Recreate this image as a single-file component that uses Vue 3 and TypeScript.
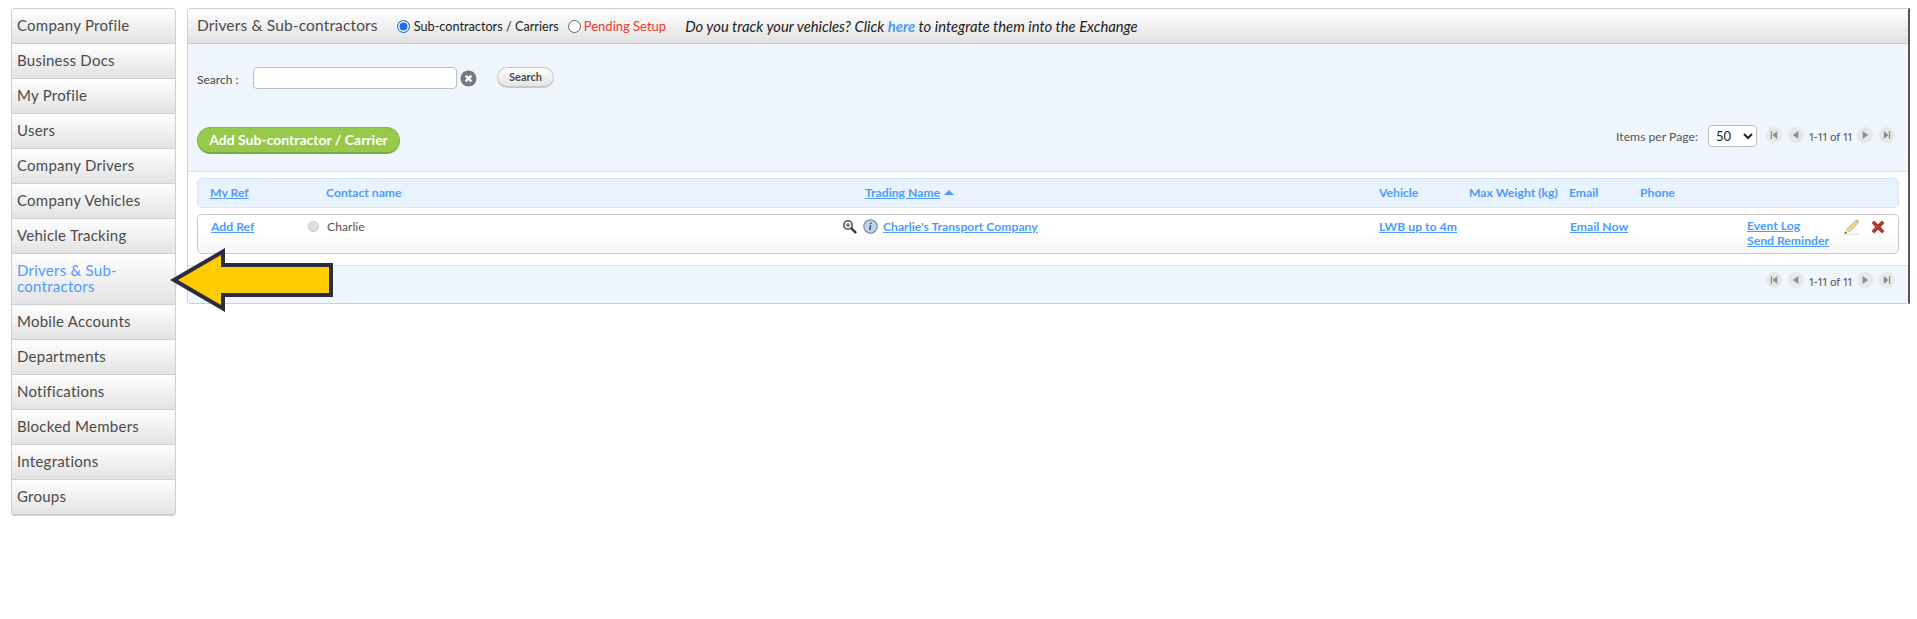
<script setup lang="ts">
const navItems: string[] = [
  'Company Profile', 'Business Docs', 'My Profile', 'Users', 'Company Drivers',
  'Company Vehicles', 'Vehicle Tracking', 'Drivers & Sub-contractors', 'Mobile Accounts',
  'Departments', 'Notifications', 'Blocked Members', 'Integrations', 'Groups',
]
const activeItem = 'Drivers & Sub-contractors'
const pagers = [
  { cls: 'first', d: 'M6 5h1.6v10H6zM14 5v10l-6-5z' },
  { cls: 'prev', d: 'M13 5v10l-7-5z' },
]
const pagersEnd = [
  { cls: 'next', d: 'M7 5v10l7-5z' },
  { cls: 'last', d: 'M6 5v10l6-5zM12.4 5H14v10h-1.6z' },
]
</script>

<template>
  <div class="page">
    <nav class="side">
      <a v-for="item in navItems" :key="item" class="side-item" :class="{ active: item === activeItem }">{{ item }}</a>
    </nav>

    <main class="panel">
      <header class="head">
        <h1 class="title">Drivers &amp; Sub-contractors</h1>
        <label class="radio first-radio"><span class="dot on"></span>Sub-contractors / Carriers</label>
        <label class="radio second-radio"><span class="dot"></span><span class="red">Pending Setup</span></label>
        <em class="promo">Do you track your vehicles? Click <a class="here">here</a> to integrate them into the Exchange</em>
      </header>

      <section class="tools">
        <div class="search">
          <span class="search-label">Search :</span>
          <input class="search-input" type="text" />
          <svg class="clear" width="17" height="17" viewBox="0 0 17 17">
            <circle cx="8.5" cy="8.5" r="8" fill="#76797b" />
            <path d="M5.6 5.6l5.8 5.8M11.4 5.6l-5.8 5.8" stroke="#fff" stroke-width="2.4" />
          </svg>
          <button class="search-btn">Search</button>
        </div>
        <div class="actions">
          <button class="add-btn">Add Sub-contractor / Carrier</button>
          <div class="paging">
            <span class="ipp">Items per Page:</span>
            <select class="select"><option>50</option></select>
            <div class="pager">
              <svg v-for="p in pagers" :key="p.cls" class="pg" :class="p.cls" width="16" height="16" viewBox="0 0 20 20"><circle cx="10" cy="10" r="10" fill="#e6e8ea" /><path :d="p.d" fill="#8b8f93" /></svg>
              <span class="count">1-11 of 11</span>
              <svg v-for="p in pagersEnd" :key="p.cls" class="pg" :class="p.cls" width="16" height="16" viewBox="0 0 20 20"><circle cx="10" cy="10" r="10" fill="#e6e8ea" /><path :d="p.d" fill="#8b8f93" /></svg>
            </div>
          </div>
        </div>
      </section>

      <section class="table">
        <div class="grid thead">
          <a class="link">My Ref</a>
          <span>Contact name</span>
          <span><a class="link">Trading Name</a><i class="sort"></i></span>
          <span>Vehicle</span>
          <span>Max Weight (kg)</span>
          <span>Email</span>
          <span>Phone</span>
        </div>
        <div class="grid trow">
          <a class="link add-ref">Add Ref</a>
          <span class="contact">
            <i class="status"></i>
            <span class="name">Charlie</span>
          </span>
          <span class="trading">
            <svg class="zoom" width="15" height="15" viewBox="0 0 15 15">
              <circle cx="6" cy="6" r="4.3" fill="#ececec" stroke="#555" stroke-width="1.6" />
              <path d="M9.4 9.4l4 4" stroke="#3c3c3c" stroke-width="2.4" stroke-linecap="round" />
              <path d="M4 6h4M6 4v4" stroke="#555" stroke-width="1.1" />
            </svg>
            <svg class="info" width="15" height="15" viewBox="0 0 15 15">
              <circle cx="7.5" cy="7.5" r="6.7" fill="#bcd3ec" stroke="#7d8790" stroke-width="1.1" />
              <path d="M7.9 3.4v1.5M7.6 6.2l-.9 5" stroke="#3b4654" stroke-width="1.4" />
            </svg>
            <a class="link">Charlie's Transport Company</a>
          </span>
          <a class="link">LWB up to 4m</a>
          <span></span>
          <a class="link email-now">Email Now</a>
          <span></span>
          <span class="row-end">
            <span class="logs">
              <a class="link">Event Log</a>
              <a class="link">Send Reminder</a>
            </span>
            <svg class="pencil" width="18" height="16" viewBox="0 0 18 16">
              <path d="M1 15.4c5-.4 10-.4 16 0" stroke="#dcdcd8" stroke-width="1" fill="none" />
              <path d="M3.6 10.6L12.6 1.4l2.6 2.4-9 9.2z" fill="#ecd98a" stroke="#b8a65c" stroke-width=".7" />
              <path d="M12.6 1.4l1-1 2.6 2.4-1 1z" fill="#d9a08f" />
              <path d="M3.6 10.6l2.6 2.4L1.4 15z" fill="#f0e2bd" />
              <path d="M1.4 15l1.2-2.6 1.2 1.4z" fill="#222" />
            </svg>
            <svg class="cross" width="14" height="14" viewBox="0 0 14 14">
              <path d="M3 .6L7 4.2 11 .6l2.4 2.5L9.8 7l3.6 3.9-2.4 2.5L7 9.8l-4 3.6L.6 10.9 4.2 7 .6 3.1z" fill="#b03a30" />
            </svg>
          </span>
        </div>
      </section>

      <footer class="foot">
        <div class="pager">
          <svg v-for="p in pagers" :key="p.cls" class="pg" :class="p.cls" width="16" height="16" viewBox="0 0 20 20"><circle cx="10" cy="10" r="10" fill="#e6e8ea" /><path :d="p.d" fill="#8b8f93" /></svg>
          <span class="count">1-11 of 11</span>
          <svg v-for="p in pagersEnd" :key="p.cls" class="pg" :class="p.cls" width="16" height="16" viewBox="0 0 20 20"><circle cx="10" cy="10" r="10" fill="#e6e8ea" /><path :d="p.d" fill="#8b8f93" /></svg>
        </div>
      </footer>
    </main>

    <svg class="arrow" width="168" height="70" viewBox="0 0 168 70">
      <path d="M6 35L55 6.5V20H163V50H55V63.5Z" fill="#ffcc00" stroke="#2b2c42" stroke-width="4" stroke-linejoin="miter" />
    </svg>
  </div>
</template>

<style>
html, body { margin: 0; background: #fff; }
</style>

<style scoped>
* { box-sizing: border-box; }
.page {
  position: relative;
  display: flex;
  align-items: flex-start;
  gap: 11px;
  width: 1917px;
  height: 619px;
  padding: 8px 7px 0 11px;
  font-family: Lato, "Noto Sans", sans-serif;
  font-variant-numeric: proportional-nums;
  color: #4a4a4a;
  overflow: hidden;
}
.side {
  display: flex;
  flex-direction: column;
  flex: 0 0 165px;
  border: 1px solid #cfcfcf;
  border-bottom-width: 2px;
  border-radius: 4px;
  overflow: hidden;
}
.side-item {
  display: flex;
  align-items: center;
  min-height: 35px;
  padding: 0 16px 3px 5px;
  font-size: 15px;
  line-height: 16px;
  color: #4b4b4b;
  background: linear-gradient(#fff, #e3e3e3);
  border-bottom: 1px solid #cfcfcf;
  letter-spacing: .25px;
}
.side-item:last-child { border-bottom: 0; min-height: 34px; }
.side-item.active { color: #4d9bff; min-height: 51px; padding-right: 40px; }
.panel {
  flex: 1;
  height: 296px;
  display: flex;
  flex-direction: column;
  border: 1px solid #cfcfcf;
  border-right: 2px solid #555;
  border-radius: 4px 0 0 4px;
  overflow: hidden;
}
.head {
  display: flex;
  align-items: center;
  flex: 0 0 35px;
  padding: 0 9px;
  background: linear-gradient(#fff, #e2e2e2);
  border-bottom: 1px solid #c9c9c9;
  font-size: 12.7px;
  color: #222;
}
.title {
  margin: 0 0 3px;
  font-size: 15.5px;
  font-weight: 400;
  color: #4b4b4b;
  letter-spacing: .15px;
}
.radio { display: flex; align-items: center; gap: 4px; }
.first-radio { margin-left: 19px; }
.second-radio { margin-left: 9px; gap: 3px; }
.dot {
  width: 13px;
  height: 13px;
  border: 1px solid #666;
  border-radius: 50%;
  background: #fff;
}
.dot.on { border: 1.5px solid #1f6fe5; box-shadow: inset 0 0 0 1.5px #fff; background: #1f6fe5; }
.red { color: #f1362a; font-size: 13px; }
.promo { margin-left: 19px; font-size: 14.8px; color: #222; }
.here { color: #4d9bff; font-weight: 700; }
.tools {
  flex: 0 0 128px;
  padding: 23px 9px 0;
  background: #eff6fe;
  border-bottom: 1px solid #d3e5f8;
}
.search { display: flex; align-items: center; height: 22px; }
.search-label { width: 56px; font-size: 12px; color: #444; padding-top: 2px; }
.search-input {
  width: 204px;
  height: 22px;
  border: 1px solid #bdbdbd;
  border-radius: 4px;
  background: #fff;
}
.clear { margin-left: 3px; }
.search-btn {
  margin: -2px 0 0 20px;
  width: 57px;
  height: 21px;
  padding: 0;
  border: 1px solid #c7c7c7;
  border-bottom-width: 2px;
  border-radius: 11px;
  background: linear-gradient(#fff, #e4e4e4);
  font: 700 11px Lato, sans-serif;
  color: #4a4a4a;
}
.actions {
  display: flex;
  justify-content: space-between;
  align-items: flex-start;
  margin-top: 38px;
  padding-right: 4px;
}
.add-btn {
  width: 203px;
  height: 27px;
  padding: 0 0 2px;
  border: 1px solid #86b546;
  border-bottom: 2px solid #7ea846;
  border-radius: 14px;
  background: #97c94a;
  font: 700 14px Lato, sans-serif;
  color: #fff;
}
.paging { display: flex; align-items: center; margin-top: -2px; }
.ipp { font-size: 12.2px; color: #555; margin-right: 10px; }
.select {
  width: 49px;
  height: 22px;
  margin-right: 9px;
  padding: 0 0 0 3px;
  border: 1px solid #bdbdbd;
  border-radius: 4px;
  background: #fff;
  font: 13px Lato, sans-serif;
  color: #222;
}
.pager { display: flex; align-items: center; }
.pg { margin: -3px 0 0; }
.prev { margin-left: 6px; margin-right: 5px; }
.next { margin-left: 6px; margin-right: 6px; }
.count { font-size: 11.5px; color: #555; width: 42px; text-align: center; white-space: nowrap; }
.table { flex: 0 0 93px; padding: 6px 9px 0 9px; background: #fff; }
.grid {
  display: grid;
  grid-template-columns: 116px 539px 514px 90px 100px 71px 107px 1fr;
  padding-left: 12px;
  border-radius: 5px;
  font-size: 12.2px;
  font-weight: 700;
}
.thead {
  height: 30px;
  align-items: center;
  background: #e9f3fe;
  border: 1px solid #d3e5f8;
  color: #4d9bff;
  padding-bottom: 2px;
}
.trow {
  height: 40px;
  margin-top: 6px;
  padding-top: 4px;
  align-items: start;
  border: 1px solid #c9c9c9;
  background: linear-gradient(#fff 40%, #f6f6f6);
}
.link { color: #4d9bff; text-decoration: underline; font-weight: 700; }
.sort {
  display: inline-block;
  margin-left: 4px;
  border: 5px solid transparent;
  border-top: 0;
  border-bottom: 5px solid #4d9bff;
  vertical-align: 2px;
}
.add-ref { margin-left: 1px; }
.contact { display: flex; align-items: center; margin-left: -18px; }
.status {
  width: 11px;
  height: 11px;
  border-radius: 50%;
  background: #dfdfdf;
  border: 1px solid #c5c5c5;
}
.name { margin-left: 8px; font-weight: 400; color: #555; font-size: 12.2px; }
.trading { display: flex; align-items: center; margin-left: -23px; gap: 5.5px; }
.email-now { margin-left: 1px; justify-self: start; }
.trow > .link { justify-self: start; }
.row-end { display: flex; align-items: flex-start; white-space: nowrap; }
.logs { display: flex; flex-direction: column; line-height: 14.6px; width: 96px; }
.logs .link { align-self: flex-start; }
.cross { margin: 1px 0 0 10px; }
.foot {
  flex: 1;
  display: flex;
  justify-content: flex-end;
  align-items: center;
  padding: 0 13px 7px 0;
  background: #eff6fe;
  border-top: 1px solid #d3e5f8;
}
.arrow { position: absolute; left: 168px; top: 245px; }
</style>
